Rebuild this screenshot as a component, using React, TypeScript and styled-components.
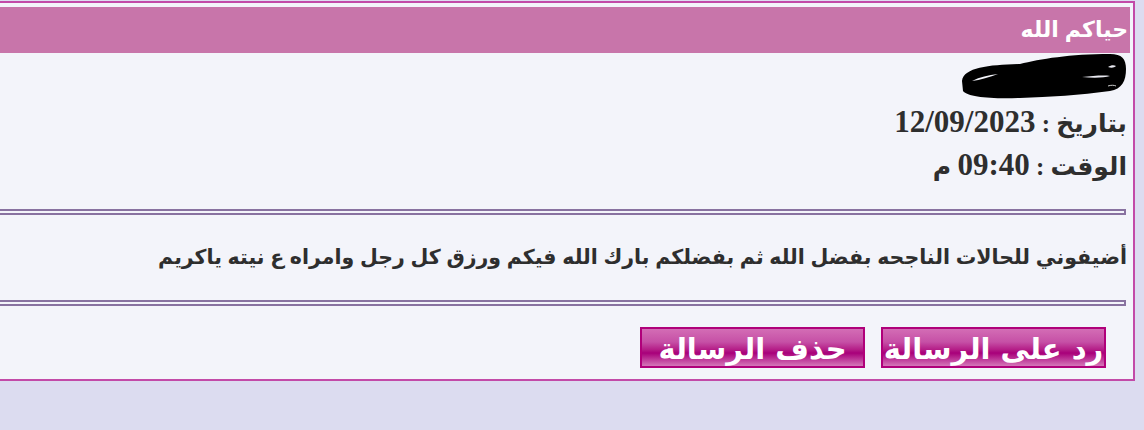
import React from 'react'
import styled, { createGlobalStyle } from 'styled-components'

const GlobalStyle = createGlobalStyle`
  html, body {
    margin: 0;
    padding: 0;
    background: #dcdcf0;
  }
`

const Page = styled.div`
  direction: rtl;
  overflow: hidden;
  padding: 1px 9px 0 0;
  height: 430px;
  box-sizing: border-box;
`

const MessageBox = styled.div`
  margin-left: -12px;
  border: 2px solid #c24aa8;
  background: #f3f4fa;
  padding: 4px 3px 11px 0;
`

const Header = styled.div`
  background: #c875aa;
  height: 46px;
  display: flex;
  align-items: center;
  padding-right: 2px;
  font-family: "Liberation Sans", "DejaVu Sans", sans-serif;
  font-weight: bold;
  font-size: 22px;
  color: #fff;
`

const Info = styled.div`
  padding-right: 3px;
  display: flex;
  flex-direction: column;
  align-items: flex-start;
`

const Scribble = styled.svg`
  display: block;
  width: 167px;
  height: 46px;
  margin-bottom: 1px;
`

const InfoLine = styled.div`
  font-family: "Liberation Serif", "DejaVu Sans", serif;
  font-weight: bold;
  font-size: 25px;
  line-height: 43px;
  height: 43px;
  color: #2e2e2e;
`

const Value = styled.span`
  font-size: 31px;
  line-height: 43px;
`

const Divider = styled.div<{ $top: number }>`
  margin-top: ${(p) => p.$top}px;
  margin-right: 4px;
  height: 2px;
  border: 2px solid #8872a0;
  background: #f3f4fa;
`

const Body = styled.div`
  padding: 30px 3px 0 0;
  height: 85px;
  box-sizing: border-box;
  font-family: "Liberation Sans", "DejaVu Sans", sans-serif;
  font-weight: bold;
  font-size: 20.5px;
  line-height: 24px;
  color: #2e2e2e;
`

const Actions = styled.div`
  display: flex;
  gap: 16px;
  padding: 21px 24px 0 0;
`

const ActionButton = styled.button`
  width: 225px;
  height: 41px;
  border: 2px solid #b0007a;
  padding: 2px 0 0;
  background: linear-gradient(
    to bottom,
    #d36db5 0%,
    #c650a6 35%,
    #b51f88 55%,
    #a8007a 65%,
    #c2439e 85%,
    #d478b8 100%
  );
  font-family: "DejaVu Sans", sans-serif;
  font-weight: bold;
  font-size: 29px;
  line-height: 34px;
  color: #fff;
  cursor: pointer;
  direction: rtl;
  text-align: center;
  white-space: nowrap;
`

const Redacted = () => (
  <Scribble viewBox="0 0 167 46">
    <path
      d="M2 28 C4 14 30 12 60 11 C80 6 110 1 150 1 C162 1 166 6 166 16 C166 28 162 36 150 38 C120 42 90 44 60 45 C30 46 8 44 3 38 Z"
      fill="#000"
    />
    <path d="M12 28 C20 24 28 22 38 21 C30 24 20 27 12 28 Z" fill="#f3f4fa" />
    <path d="M122 24 C132 23 144 22 150 23 C144 25 132 25 122 24 Z" fill="#e8e8f0" />
    <path d="M148 14 C151 12 154 12 156 13 C154 15 151 15 148 14 Z" fill="#e8e8f0" />
    <path d="M148 33 C151 32 154 32 156 33" stroke="#ccc" strokeWidth="1" fill="none" />
  </Scribble>
)

export default function App() {
  return (
    <Page>
      <GlobalStyle />
      <MessageBox>
        <Header>حياكم الله</Header>
        <Info>
          <Redacted />
          <InfoLine>
            بتاريخ : <Value>12/09/2023</Value>
          </InfoLine>
          <InfoLine>
            الوقت : <Value>09:40</Value> م
          </InfoLine>
        </Info>
        <Divider $top={23} />
        <Body>أضيفوني للحالات الناجحه بفضل الله ثم بفضلكم بارك الله فيكم ورزق كل رجل وامراه ع نيته ياكريم</Body>
        <Divider $top={0} />
        <Actions>
          <ActionButton>رد على الرسالة</ActionButton>
          <ActionButton>حذف الرسالة</ActionButton>
        </Actions>
      </MessageBox>
    </Page>
  )
}
